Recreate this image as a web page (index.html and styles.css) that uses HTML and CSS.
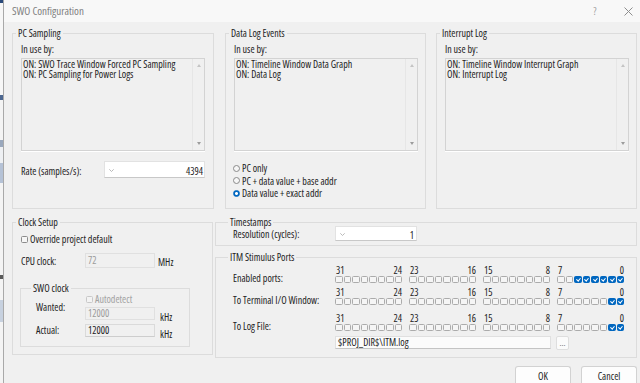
FILE: index.html
```html
<!DOCTYPE html>
<html lang="en">
<head>
<meta charset="utf-8">
<title>SWO Configuration</title>
<link rel="stylesheet" href="styles.css">
</head>
<body>
<div class="screen">
  <div class="behind"></div>
  <div class="dialog">
    <header class="titlebar">
      <span class="title">SWO Configuration</span>
      <span class="help">?</span>
      <svg class="close" width="9" height="9" viewBox="0 0 9 9"><path d="M0.5 0.5L8.5 8.5M8.5 0.5L0.5 8.5" stroke="#8e8e8e" stroke-width="1" fill="none"/></svg>
    </header>
    <div class="content">
      <div class="row-top">
        <fieldset class="grp top pc">
          <legend>PC Sampling</legend>
          <div class="cap">In use by:</div>
          <div class="listbox">
            <div class="items"><div>ON: SWO Trace Window Forced PC Sampling</div><div>ON: PC Sampling for Power Logs</div></div>
            <div class="vscroll"><span class="arr up"></span><span class="arr down"></span></div>
          </div>
          <div class="rate-row">
            <span class="rate-label">Rate (samples/s):</span>
            <div class="combo rate"><svg class="chev" width="5" height="3" viewBox="0 0 5 3"><path d="M0.3 0.3L2.5 2.5L4.7 0.3" stroke="#a8a8a8" stroke-width="0.8" fill="none"/></svg><span class="val">4394</span></div>
          </div>
        </fieldset>
        <fieldset class="grp top dl">
          <legend>Data Log Events</legend>
          <div class="cap">In use by:</div>
          <div class="listbox">
            <div class="items"><div>ON: Timeline Window Data Graph</div><div>ON: Data Log</div></div>
            <div class="vscroll"><span class="arr up"></span><span class="arr down"></span></div>
          </div>
          <div class="radios">
            <div class="radio"><span class="rb"></span>PC only</div>
            <div class="radio"><span class="rb"></span>PC + data value + base addr</div>
            <div class="radio"><span class="rb on"></span>Data value + exact addr</div>
          </div>
        </fieldset>
        <fieldset class="grp top il">
          <legend>Interrupt Log</legend>
          <div class="cap">In use by:</div>
          <div class="listbox">
            <div class="items"><div>ON: Timeline Window Interrupt Graph</div><div>ON: Interrupt Log</div></div>
            <div class="vscroll"><span class="arr up"></span><span class="arr down"></span></div>
          </div>
        </fieldset>
      </div>

      <div class="row-bottom">
        <fieldset class="grp clock">
          <legend>Clock Setup</legend>
          <div class="chk-row"><span class="chk"></span>Override project default</div>
          <div class="cpu-row">
            <span class="cpu-label">CPU clock:</span>
            <span class="field dis">72</span>
            <span class="unit">MHz</span>
          </div>
          <fieldset class="grp swo">
            <legend>SWO clock</legend>
            <div class="swo-grid">
              <div class="auto"><span class="chk dis"></span>Autodetect</div>
              <span class="swo-label wanted">Wanted:</span>
              <span class="field dis small">12000</span>
              <span class="khz">kHz</span>
              <span class="swo-label actual">Actual:</span>
              <span class="field small">12000</span>
              <span class="khz">kHz</span>
            </div>
          </fieldset>
        </fieldset>

        <div class="right-col">
          <fieldset class="grp ts">
            <legend>Timestamps</legend>
            <div class="ts-row">
              <span class="res-label">Resolution (cycles):</span>
              <div class="combo res"><svg class="chev" width="5" height="3" viewBox="0 0 5 3"><path d="M0.3 0.3L2.5 2.5L4.7 0.3" stroke="#a8a8a8" stroke-width="0.8" fill="none"/></svg><span class="val">1</span></div>
            </div>
          </fieldset>
          <fieldset class="grp itm">
            <legend>ITM Stimulus Ports</legend>
            <div class="port-row r1">
              <span class="port-label">Enabled ports:</span>
              <div class="bits">
                <div class="bgrp"><div class="nums"><span>31</span><span>24</span></div><div class="boxes"><i class="b"></i><i class="b"></i><i class="b"></i><i class="b"></i><i class="b"></i><i class="b"></i><i class="b"></i><i class="b"></i></div></div>
                <div class="bgrp"><div class="nums"><span>23</span><span>16</span></div><div class="boxes"><i class="b"></i><i class="b"></i><i class="b"></i><i class="b"></i><i class="b"></i><i class="b"></i><i class="b"></i><i class="b"></i></div></div>
                <div class="bgrp"><div class="nums"><span>15</span><span>8</span></div><div class="boxes"><i class="b"></i><i class="b"></i><i class="b"></i><i class="b"></i><i class="b"></i><i class="b"></i><i class="b"></i><i class="b"></i></div></div>
                <div class="bgrp"><div class="nums"><span>7</span><span>0</span></div><div class="boxes"><i class="b"></i><i class="b"></i><i class="b on"></i><i class="b on"></i><i class="b on"></i><i class="b on"></i><i class="b on"></i><i class="b on"></i></div></div>
              </div>
            </div>
            <div class="port-row r2">
              <span class="port-label">To Terminal I/O Window:</span>
              <div class="bits">
                <div class="bgrp"><div class="nums"><span>31</span><span>24</span></div><div class="boxes"><i class="b"></i><i class="b"></i><i class="b"></i><i class="b"></i><i class="b"></i><i class="b"></i><i class="b"></i><i class="b"></i></div></div>
                <div class="bgrp"><div class="nums"><span>23</span><span>16</span></div><div class="boxes"><i class="b"></i><i class="b"></i><i class="b"></i><i class="b"></i><i class="b"></i><i class="b"></i><i class="b"></i><i class="b"></i></div></div>
                <div class="bgrp"><div class="nums"><span>15</span><span>8</span></div><div class="boxes"><i class="b"></i><i class="b"></i><i class="b"></i><i class="b"></i><i class="b"></i><i class="b"></i><i class="b"></i><i class="b"></i></div></div>
                <div class="bgrp"><div class="nums"><span>7</span><span>0</span></div><div class="boxes"><i class="b"></i><i class="b"></i><i class="b"></i><i class="b"></i><i class="b"></i><i class="b"></i><i class="b on"></i><i class="b on"></i></div></div>
              </div>
            </div>
            <div class="port-row r3">
              <span class="port-label">To Log File:</span>
              <div class="bits">
                <div class="bgrp"><div class="nums"><span>31</span><span>24</span></div><div class="boxes"><i class="b"></i><i class="b"></i><i class="b"></i><i class="b"></i><i class="b"></i><i class="b"></i><i class="b"></i><i class="b"></i></div></div>
                <div class="bgrp"><div class="nums"><span>23</span><span>16</span></div><div class="boxes"><i class="b"></i><i class="b"></i><i class="b"></i><i class="b"></i><i class="b"></i><i class="b"></i><i class="b"></i><i class="b"></i></div></div>
                <div class="bgrp"><div class="nums"><span>15</span><span>8</span></div><div class="boxes"><i class="b"></i><i class="b"></i><i class="b"></i><i class="b"></i><i class="b"></i><i class="b"></i><i class="b"></i><i class="b"></i></div></div>
                <div class="bgrp"><div class="nums"><span>7</span><span>0</span></div><div class="boxes"><i class="b"></i><i class="b"></i><i class="b"></i><i class="b"></i><i class="b"></i><i class="b"></i><i class="b on"></i><i class="b on"></i></div></div>
              </div>
            </div>
            <div class="path-row">
              <span class="path">$PROJ_DIR$\ITM.log</span>
              <span class="browse">...</span>
            </div>
          </fieldset>
        </div>
      </div>

      <div class="buttons">
        <span class="btn">OK</span>
        <span class="btn">Cancel</span>
      </div>
    </div>
  </div>
</div>
</body>
</html>
```
FILE: styles.css
```css
* { box-sizing: border-box; }
html, body { margin: 0; padding: 0; }
body {
  width: 640px; height: 383px; overflow: hidden;
  background: #f0f0f0;
  font-family: "Open Sans", "Liberation Sans", sans-serif;
  font-size: 10px; font-stretch: 87%; font-weight: 370;
  line-height: 12px; color: #222;
}
.screen { display: flex; height: 383px; }
.behind {
  width: 3px; flex: none;
  background: linear-gradient(to bottom, #2a4a7a 0 3px, #f7f7f7 3px 95px, #4d6790 95px 100px,
    #f4f4f4 100px 140px, #9aa8bd 140px 147px, #eef0f3 147px 163px, #b5c2d6 163px 183px,
    #f4f4f4 183px 275px, #5a5a5a 275px 279px, #f4f4f4 279px 300px, #c7d1df 300px 322px, #f4f4f4 322px);
}
.dialog {
  flex: 1; display: flex; flex-direction: column;
  border-left: 1px solid #a9a9a9; background: #f0f0f0;
}
.titlebar {
  height: 22px; flex: none; display: flex; align-items: center;
  padding: 0 7px 0 8px; background: #f8f8f8;
}
.title { font-size: 11px; font-stretch: 84%; color: #808080; }
.help { margin-left: auto; width: 10px; text-align: center; color: #9c9c9c; font-size: 10.5px; }
.close { margin-left: 24px; }
.content { padding: 5px 3px 0 8px; }

/* group boxes */
.grp {
  margin: 0; min-width: 0;
  border: 1px solid #dcdcdc;
  padding: 0 8px;
}
.grp > legend { padding: 0 2px; margin-left: -5px; line-height: 12px; }

.row-top { display: flex; }
.top { height: 182px; padding-top: 4px; width: 201px; }
.pc { width: 202px; }
.dl { margin-left: 11px; }
.il { margin-left: 10px; }

.listbox {
  display: flex; width: 184px; height: 93px; margin-top: 3px;
  border: 1px solid #d3d3d3; box-shadow: 0 1px 0 #fff;
  background: #f0f0f0; line-height: 10px;
}
.items { flex: 1; padding-left: 1px; white-space: nowrap; }
.vscroll {
  width: 12px; flex: none; border-left: 1px solid #e6e6e6;
  display: flex; flex-direction: column; justify-content: space-between; align-items: center;
  padding: 5px 0 5px;
}
.arr { width: 0; height: 0; border-left: 2.5px solid transparent; border-right: 2.5px solid transparent; }
.arr.up { border-bottom: 3px solid #c4c4c4; }
.arr.down { border-top: 3px solid #9c9c9c; }

.rate-row { display: flex; align-items: center; margin-top: 10px; }
.rate-label { width: 83px; padding-top: 3px; }
.combo {
  display: flex; align-items: center; background: #fff;
  border: 1px solid #e2e2e2; border-bottom-color: #c8c8c8;
  padding: 0 1px 0 4px;
}
.combo .val { margin-left: auto; padding-top: 2px; }
.combo .chev { margin-top: 2px; }
.combo.rate { width: 102px; height: 17px; }

.radios { margin-top: 11px; }
.radio { display: flex; align-items: center; height: 12.5px; white-space: nowrap; }
.rb {
  width: 7px; height: 7px; border-radius: 50%; flex: none;
  border: 1px solid #8a8a8a; background: #f6f6f6;
  margin: 0 2px 0 -1px;
}
.rb.on { border-color: #0067c0; background: radial-gradient(circle, #fff 0 1.2px, #0067c0 1.7px); }

.chk {
  width: 7px; height: 7px; flex: none;
  border: 1px solid #8c8c8c; border-radius: 1.5px; background: #f6f6f6;
}
.chk.dis { border-color: #c8c8c8; background: #f3f3f3; }

/* bottom part */
.row-bottom { display: flex; align-items: flex-start; margin-top: 7px; }
.clock { width: 201px; height: 139px; padding-top: 5px; }
.chk-row { display: flex; align-items: center; height: 12px; gap: 2px; white-space: nowrap; }
.cpu-row { display: flex; align-items: center; margin-top: 8px; height: 15px; }
.cpu-label { width: 64px; padding-top: 1px; }
.field {
  display: block; width: 70px; height: 15px;
  border: 1px solid #dadada; border-bottom-color: #cdcdcd; background: #f0f0f0;
  padding-left: 2px; line-height: 12px;
}
.field.dis { color: #9b9b9b; border-color: #e0e0e0; }
.field.small { height: 13px; line-height: 11px; }
.unit { margin-left: 3px; padding-top: 2px; }

.swo { width: 170px; height: 65px; margin: 14px 0 0 -1px; padding: 0 0 0 15px; }
.swo-grid {
  display: grid; grid-template-columns: 49px 70px auto;
  grid-template-rows: 10px 17px 17px; align-items: start;
}
.auto { grid-column: 2 / 4; display: flex; align-items: center; gap: 2px; height: 10px; padding-left: 1px; color: #a2a2a2; }
.swo-label { line-height: 10px; }
.swo-label.wanted { margin-top: -2px; }
.swo-label.actual { margin-top: 4px; }
.swo-grid .field { margin-top: 3px; }
.khz { margin: 8px 0 0 5px; line-height: 10px; }

.right-col { width: 422px; margin-left: 2px; display: flex; flex-direction: column; }
.ts { height: 30px; padding: 0 0 0 17px; }
.ts-row { display: flex; align-items: center; margin-top: -2px; }
.res-label { width: 102px; padding-top: 1px; }
.combo.res { width: 82px; height: 15px; padding-right: 2px; }

.itm { height: 107px; margin-top: 5px; padding: 2px 0 0 17px; }
.port-row { display: flex; }
.port-row.r2 { margin-top: 3px; }
.port-row.r3 { margin-top: 7px; }
.port-label { width: 102px; padding-top: 7px; white-space: nowrap; }
.bits { display: flex; gap: 7px; }
.bgrp { width: 67px; display: flex; flex-direction: column; }
.nums { display: flex; justify-content: space-between; height: 10px; line-height: 10px; padding: 0 0 0 1px; }
.boxes { display: grid; grid-template-columns: repeat(8, 1fr); column-gap: 1px; margin-top: 1px; }
.b {
  display: block; height: 7px;
  border: 1px solid #ababab; border-radius: 1.5px; background: #f5f5f5;
  position: relative;
}
.b.on { background: #0067c0; border-color: #0067c0; }
.b.on::after {
  content: ""; position: absolute; left: 1.6px; top: 0.2px;
  width: 1.6px; height: 3px;
  border-right: 1px solid #fff; border-bottom: 1px solid #fff;
  transform: rotate(40deg);
}
.path-row { display: flex; margin: 4px 0 0 102px; }
.path {
  width: 216px; height: 13px; line-height: 11px; padding-left: 2px;
  background: #fbfbfb; border: 1px solid #e0e0e0; border-bottom-color: #c4c4c4;
}
.browse {
  width: 13px; height: 14px; margin-left: 5px; line-height: 11px; text-align: center;
  background: #fbfbfb; border: 1px solid #dedede; border-radius: 2px; color: #777; font-size: 9px;
}

.buttons { display: flex; justify-content: flex-end; gap: 10px; margin-top: 8px; }
.btn {
  width: 56px; height: 22px; text-align: center; padding-top: 3px;
  background: #fdfdfd; border: 1px solid #d2d2d2; border-bottom-color: #c2c2c2; border-radius: 3px;
}
```
